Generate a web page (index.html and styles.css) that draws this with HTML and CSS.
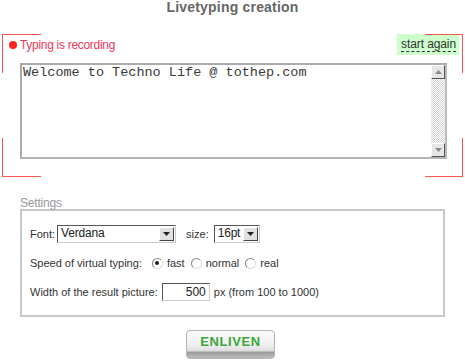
FILE: index.html
```html
<!DOCTYPE html>
<html>
<head>
<meta charset="utf-8">
<link rel="stylesheet" href="styles.css">
</head>
<body>
<h1 class="title">Livetyping creation</h1>

<section class="rec">
  <span class="corner tl"></span>
  <span class="corner tr"></span>
  <span class="corner bl"></span>
  <span class="corner br"></span>
  <div class="rec-head">
    <div class="status"><span class="dot"></span>Typing is recording</div>
    <div class="again"><span class="again-link">start again</span></div>
  </div>
  <div class="editor">
    <textarea class="text" spellcheck="false">Welcome to Techno Life @ tothep.com</textarea>
    <div class="sbar">
      <span class="sbtn"><svg width="7" height="4" viewBox="0 0 7 4"><path d="M0 4 L3.5 0 L7 4 Z" fill="#8a8a8a"/></svg></span>
      <span class="strack"></span>
      <span class="sbtn"><svg width="7" height="4" viewBox="0 0 7 4"><path d="M0 0 L7 0 L3.5 4 Z" fill="#8a8a8a"/></svg></span>
    </div>
  </div>
</section>

<section class="settings">
  <div class="settings-label">Settings</div>
  <div class="box">
    <div class="row">
      <span class="lbl">Font:</span>
      <span class="sel sel-font"><span class="sel-val">Verdana</span><span class="sel-arrow"><svg width="7" height="4" viewBox="0 0 7 4"><path d="M0 0 L7 0 L3.5 4 Z" fill="#222"/></svg></span></span>
      <span class="lbl lbl-size">size:</span>
      <span class="sel sel-size"><span class="sel-val">16pt</span><span class="sel-arrow"><svg width="7" height="4" viewBox="0 0 7 4"><path d="M0 0 L7 0 L3.5 4 Z" fill="#222"/></svg></span></span>
    </div>
    <div class="row">
      <span class="lbl">Speed of virtual typing:</span>
      <label class="opt first"><span class="radio on"></span>fast</label>
      <label class="opt"><span class="radio"></span>normal</label>
      <label class="opt"><span class="radio"></span>real</label>
    </div>
    <div class="row">
      <span class="lbl">Width of the result picture:</span>
      <span class="num">500</span>
      <span class="lbl">px (from 100 to 1000)</span>
    </div>
  </div>
</section>

<div class="actions">
  <button class="go">ENLIVEN</button>
</div>
</body>
</html>
```

FILE: styles.css
```css
html, body {
  margin: 0;
  padding: 0;
  background: #fff;
}
body {
  width: 465px;
  height: 363px;
  overflow: hidden;
  font-family: "Liberation Sans", Arial, sans-serif;
}
.title {
  margin: 0;
  height: 35px;
  font-size: 14px;
  line-height: 14px;
  font-weight: bold;
  letter-spacing: 0.2px;
  color: #666;
  text-align: center;
}
.rec {
  position: relative;
  margin: 0 2px;
  height: 143px;
}
.corner {
  position: absolute;
  width: 38px;
  height: 38px;
  border: 0 solid #f55;
}
.corner.tl { left: 0; top: 0; border-top-width: 1px; border-left-width: 1px; }
.corner.tr { right: 0; top: 0; width: 37px; border-top-width: 1px; border-right-width: 1px; }
.corner.bl { left: 0; bottom: 0; border-bottom-width: 1px; border-left-width: 1px; }
.corner.br { right: 0; bottom: 0; width: 37px; border-bottom-width: 1px; border-right-width: 1px; }

.rec-head {
  display: flex;
  justify-content: space-between;
  align-items: center;
  height: 21px;
  margin-top: -1px;
  padding: 0 4px 0 7px;
}
.status {
  display: flex;
  align-items: center;
  font-size: 12px;
  letter-spacing: -0.3px;
  color: #f0375a;
  padding-top: 1px;
}
.dot {
  width: 8px;
  height: 8px;
  border-radius: 50%;
  background: #f22;
  margin-right: 3px;
}
.again {
  background: #ccffcc;
  height: 21px;
  padding: 0 3px 0 4px;
  display: flex;
  align-items: center;
}
.again-link {
  font-size: 12px;
  letter-spacing: -0.1px;
  color: #333;
  line-height: 13px;
  border-bottom: 1px dashed #333;
}
.editor {
  display: flex;
  margin: 8px 0 0 18px;
  width: 427px;
  height: 96px;
  box-sizing: border-box;
  border: 2px solid #aaa;
  border-right-color: #bbb;
  border-bottom-color: #b5b5b5;
}
.text {
  flex: 1;
  margin: 0;
  border: 0;
  padding: 1px 1px;
  resize: none;
  overflow: hidden;
  outline: none;
  font-family: "Liberation Mono", "Courier New", monospace;
  font-size: 13.5px;
  line-height: 13px;
  color: #3a3a3a;
  background: #fff;
}
.sbar {
  width: 14px;
  display: flex;
  flex-direction: column;
}
.sbtn {
  width: 14px;
  height: 14px;
  box-sizing: border-box;
  background: #e6e6e6;
  border-top: 1px solid #fff;
  border-left: 1px solid #fff;
  border-right: 1px solid #555;
  border-bottom: 1px solid #555;
  display: flex;
  align-items: center;
  justify-content: center;
}
.strack {
  flex: 1;
  background-color: #fff;
  background-image: repeating-conic-gradient(#d4d4d4 0 25%, #fff 0 50%);
  background-size: 2px 2px;
}

.settings {
  margin-top: 20px;
}
.settings-label {
  margin-left: 20px;
  font-size: 12px;
  line-height: 12px;
  letter-spacing: -0.2px;
  color: #999;
}
.box {
  margin-left: 20px;
  width: 425px;
  box-sizing: border-box;
  border: 2px solid #c8c8c8;
  padding: 14px 8px 14px 8px;
  display: flex;
  flex-direction: column;
  gap: 11px;
}
.row {
  display: flex;
  align-items: center;
  height: 18px;
  font-size: 11px;
  color: #333;
}
.lbl { white-space: nowrap; }
.lbl-size { margin: 0 3px 0 10px; }
.sel {
  display: flex;
  align-items: stretch;
  height: 18px;
  box-sizing: border-box;
  border: 1px solid #555;
  border-right-color: #ccc;
  border-bottom-color: #ccc;
  background: #fff;
  margin-left: 2px;
}
.sel-font { width: 119px; }
.sel-size { width: 46px; }
.sel-val {
  flex: 1;
  padding-left: 3px;
  font-size: 12px;
  letter-spacing: -0.2px;
  line-height: 15px;
  color: #222;
}
.sel-arrow {
  width: 15px;
  box-sizing: border-box;
  margin: 1px;
  background: #e0e0e0;
  border-top: 1px solid #fff;
  border-left: 1px solid #fff;
  border-right: 1px solid #444;
  border-bottom: 1px solid #444;
  display: flex;
  align-items: center;
  justify-content: center;
}
.opt {
  display: flex;
  align-items: center;
  margin-left: 6px;
}
.opt.first { margin-left: 10px; }
.radio {
  width: 11px;
  height: 11px;
  box-sizing: border-box;
  border-radius: 50%;
  border: 1px solid #888;
  border-right-color: #ddd;
  border-bottom-color: #ddd;
  background: #fff;
  margin-right: 4px;
  display: flex;
  align-items: center;
  justify-content: center;
}
.radio.on::after {
  content: "";
  width: 4px;
  height: 4px;
  border-radius: 50%;
  background: #222;
}
.num {
  width: 48px;
  height: 18px;
  box-sizing: border-box;
  border: 1px solid #555;
  border-right-color: #ccc;
  border-bottom-color: #ccc;
  margin: 0 4px 0 4px;
  text-align: right;
  padding-right: 3px;
  font-size: 12px;
  line-height: 16px;
  color: #222;
}
.actions {
  padding: 13px 0 0 186px;
}
.go {
  width: 89px;
  height: 29px;
  margin: 0;
  padding: 0 0 6px 0;
  border: 1px solid #b5b5b5;
  border-radius: 4px;
  background: linear-gradient(#fbfbfb 0%, #ededed 55%, #dcdcdc 74%, #9a9a9a 78%, #bdbdbd 100%);
  font-family: "Liberation Sans", Arial, sans-serif;
  font-size: 13px;
  font-weight: bold;
  letter-spacing: 0.6px;
  color: #3aa63a;
}
```
